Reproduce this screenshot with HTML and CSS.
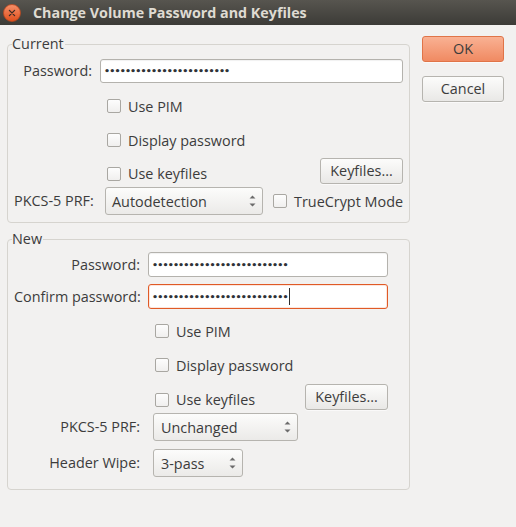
FILE: index.html
```html
<!DOCTYPE html>
<html>
<head>
<meta charset="utf-8">
<title>Change Volume Password and Keyfiles</title>
<link rel="stylesheet" href="styles.css">
</head>
<body>
<div class="window">
  <div class="titlebar">
    <span class="close">
      <svg width="18" height="18" viewBox="0 0 18 18">
        <defs>
          <linearGradient id="cg" x1="0" y1="0" x2="0" y2="1">
            <stop offset="0" stop-color="#f6906a"/>
            <stop offset="1" stop-color="#df4f1c"/>
          </linearGradient>
        </defs>
        <circle cx="9" cy="9" r="8.5" fill="url(#cg)" stroke="#b8461e" stroke-width="0.8"/>
        <path d="M6.4 6.4 L11.6 11.6 M11.6 6.4 L6.4 11.6" stroke="#3b2b24" stroke-width="1.3" stroke-linecap="round"/>
      </svg>
    </span>
    <span class="title">Change Volume Password and Keyfiles</span>
  </div>

  <div class="content">
    <div class="left">
      <div class="group">
        <div class="legend">Current</div>
        <div class="grid grid-current">
          <div class="lbl h24">Password:</div>
          <div class="entry h24"><span class="dots">••••••••••••••••••••••••</span></div>

          <div class="check-row c2 r2"><span class="check"></span><span>Use PIM</span></div>

          <div class="check-row c2 r3"><span class="check"></span><span>Display password</span></div>

          <div class="check-row c2 r4 keyrow">
            <span class="check"></span><span>Use keyfiles</span>
            <span class="button key-btn">Keyfiles...</span>
          </div>

          <div class="lbl h28 r5">PKCS-5 PRF:</div>
          <div class="combo-row r5">
            <div class="combo w158"><span>Autodetection</span><svg class="spin" width="7" height="12" viewBox="0 0 7 12"><path d="M3.5 0.5 L6.5 3.5 H0.5 Z M0.5 8.5 H6.5 L3.5 11.5 Z" fill="#6b6b6b"/></svg></div>
            <span class="check tc"></span><span class="tc-text">TrueCrypt Mode</span>
          </div>
        </div>
      </div>

      <div class="group group-new">
        <div class="legend">New</div>
        <div class="grid grid-new">
          <div class="lbl h25">Password:</div>
          <div class="entry h25"><span class="dots">••••••••••••••••••••••••••</span></div>

          <div class="lbl h25 r2">Confirm password:</div>
          <div class="entry h25 focus r2"><span class="dots">••••••••••••••••••••••••••</span><span class="caret"></span></div>

          <div class="check-row c2 r3"><span class="check"></span><span>Use PIM</span></div>

          <div class="check-row c2 r4"><span class="check"></span><span>Display password</span></div>

          <div class="check-row c2 r5 keyrow">
            <span class="check"></span><span>Use keyfiles</span>
            <span class="button key-btn">Keyfiles...</span>
          </div>

          <div class="lbl h28 r6">PKCS-5 PRF:</div>
          <div class="combo-row r6">
            <div class="combo w145"><span>Unchanged</span><svg class="spin" width="7" height="12" viewBox="0 0 7 12"><path d="M3.5 0.5 L6.5 3.5 H0.5 Z M0.5 8.5 H6.5 L3.5 11.5 Z" fill="#6b6b6b"/></svg></div>
          </div>

          <div class="lbl h28 r7">Header Wipe:</div>
          <div class="combo-row r7">
            <div class="combo w90"><span>3-pass</span><svg class="spin" width="7" height="12" viewBox="0 0 7 12"><path d="M3.5 0.5 L6.5 3.5 H0.5 Z M0.5 8.5 H6.5 L3.5 11.5 Z" fill="#6b6b6b"/></svg></div>
          </div>
        </div>
      </div>
    </div>

    <div class="right">
      <span class="button default">OK</span>
      <span class="button">Cancel</span>
    </div>
  </div>
</div>
</body>
</html>
```

FILE: styles.css
```css
html, body {
  margin: 0;
  padding: 0;
}

body {
  background: #f2f1f0;
  font-family: "Open Sans", "Noto Sans", sans-serif;
  font-size: 14.4px;
  color: #3c3c3c;
}

.window {
  width: 516px;
  height: 527px;
  overflow: hidden;
  background: #f2f1f0;
}

/* Title bar */
.titlebar {
  height: 25px;
  background: linear-gradient(#57554f, #3c3b37);
  display: flex;
  align-items: center;
}

.close {
  width: 18px;
  height: 18px;
  margin-left: 3px;
  display: flex;
}

.title {
  margin-left: 12px;
  color: #dfdbd2;
  font-weight: bold;
  font-size: 14.3px;
  line-height: 18px;
}

/* Main layout */
.content {
  display: flex;
  gap: 12px;
  padding: 0 12px 0 7px;
}

.left {
  width: 403px;
  padding-top: 19px;
}

.right {
  width: 82px;
  padding-top: 11px;
  display: flex;
  flex-direction: column;
  gap: 14px;
}

/* Group boxes */
.group {
  border: 1px solid #d6d4cf;
  border-radius: 4px;
}

.group-new {
  margin-top: 16px;
}

.legend {
  margin: -9px 0 0 4px;
  line-height: 16px;
  height: 16px;
  width: max-content;
  padding-right: 1px;
  background: #f2f1f0;
}

.grid {
  display: grid;
  column-gap: 8px;
}

.grid-current {
  margin-top: 7px;
  padding: 0 6px 7px 6px;
  grid-template-columns: 78px 303px;
  grid-template-rows: 24px 40px 34px 28px 30px;
}

.grid-new {
  margin-top: 5px;
  padding: 0 21px 12px 6px;
  grid-template-columns: 126px 240px;
  grid-template-rows: 25px 32px 39px 34px 29px 30px 36px;
}

.c2 { grid-column: 2; }
.r2 { grid-row: 2; }
.r3 { grid-row: 3; }
.r4 { grid-row: 4; }
.r5 { grid-row: 5; }
.r6 { grid-row: 6; }
.r7 { grid-row: 7; }

.lbl {
  grid-column: 1;
  text-align: right;
  align-self: end;
  white-space: nowrap;
}

.h24 { height: 24px; line-height: 24px; }
.h25 { height: 25px; line-height: 25px; }
.h28 { height: 28px; line-height: 28px; }

/* Entries */
.entry {
  grid-column: 2;
  align-self: end;
  box-sizing: border-box;
  background: #ffffff;
  border: 1px solid #b4b2ad;
  border-radius: 3px;
  box-shadow: inset 0 1px 1px rgba(0, 0, 0, 0.06);
  display: flex;
  align-items: center;
  padding-left: 3px;
  overflow: hidden;
}

.entry.focus {
  border-color: #e05a26;
  box-shadow: inset 0 0 0 1px rgba(240, 119, 70, 0.18);
}

.dots {
  font-family: "DejaVu Sans", sans-serif;
  font-weight: bold;
  font-size: 9.5px;
  line-height: 12px;
  color: #2f3237;
  letter-spacing: -0.85px;
}

.caret {
  display: inline-block;
  width: 1px;
  height: 17px;
  background: #2e2e2e;
  margin-left: 1px;
}

/* Check rows */
.check-row {
  height: 34px;
  align-self: end;
  display: flex;
  align-items: center;
  padding-left: 7px;
  white-space: nowrap;
}

.check {
  flex: none;
  box-sizing: border-box;
  width: 14px;
  height: 14px;
  border: 1px solid #a9a7a2;
  border-radius: 2px;
  background: linear-gradient(#fdfdfd, #f0efee);
  margin-right: 7px;
}

.keyrow {
  height: auto;
  align-self: stretch;
  align-items: flex-end;
  padding-bottom: 4px;
}

.keyrow > span:not(.button) {
  line-height: 14px;
}

.key-btn {
  margin-left: auto;
  align-self: flex-start;
  width: 83px;
  margin-top: 1px;
}

.grid-new .key-btn {
  margin-top: 2px;
}

/* Buttons */
.button {
  box-sizing: border-box;
  height: 26px;
  line-height: 24px;
  text-align: center;
  border: 1px solid #b6b4af;
  border-radius: 3px;
  background: linear-gradient(#fcfcfb, #e9e8e6);
  box-shadow: 0 1px 0 rgba(255, 255, 255, 0.6);
  color: #3c3c3c;
  display: block;
}

.button.default {
  border-color: #e07448;
  background: linear-gradient(#f9b193, #f08a62);
}

/* Combo boxes */
.combo-row {
  grid-column: 2;
  align-self: end;
  display: flex;
  align-items: center;
  height: 28px;
}

.combo {
  box-sizing: border-box;
  height: 28px;
  margin-left: 5px;
  border: 1px solid #b6b4af;
  border-radius: 3px;
  background: linear-gradient(#fcfcfb, #ebeae8);
  display: flex;
  align-items: center;
  justify-content: space-between;
  padding: 0 6px 0 6px;
  flex: none;
}

.grid-new .combo {
  padding-left: 7px;
}

.w158 { width: 158px; }
.w145 { width: 145px; }
.w90 { width: 90px; }

.spin {
  flex: none;
}

.check.tc {
  margin-left: 10px;
}

.tc-text {
  white-space: nowrap;
}
```
